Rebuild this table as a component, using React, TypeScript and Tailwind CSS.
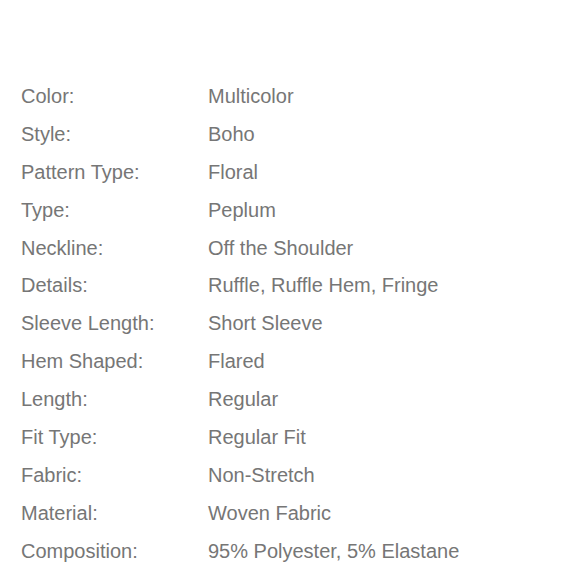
import React from "react";

const rows: [string, string][] = [
  ["Color:", "Multicolor"],
  ["Style:", "Boho"],
  ["Pattern Type:", "Floral"],
  ["Type:", "Peplum"],
  ["Neckline:", "Off the Shoulder"],
  ["Details:", "Ruffle, Ruffle Hem, Fringe"],
  ["Sleeve Length:", "Short Sleeve"],
  ["Hem Shaped:", "Flared"],
  ["Length:", "Regular"],
  ["Fit Type:", "Regular Fit"],
  ["Fabric:", "Non-Stretch"],
  ["Material:", "Woven Fabric"],
  ["Composition:", "95% Polyester, 5% Elastane"],
  ["Care Instructions:", "Machine wash or professional dry clean"],
];

export default function App() {
  return (
    <div
      className="w-[580px] h-[580px] overflow-hidden bg-white pt-[78px] pl-[21px] text-[20px] text-[#767676]"
      style={{ fontFamily: '"Liberation Sans", Arial, sans-serif' }}
    >
      {rows.map(([k, v]) => (
        <div key={k} className="grid grid-cols-[187px_1fr] leading-[37.9px] h-[37.9px] whitespace-nowrap">
          <div>{k}</div>
          <div>{v}</div>
        </div>
      ))}
    </div>
  );
}
